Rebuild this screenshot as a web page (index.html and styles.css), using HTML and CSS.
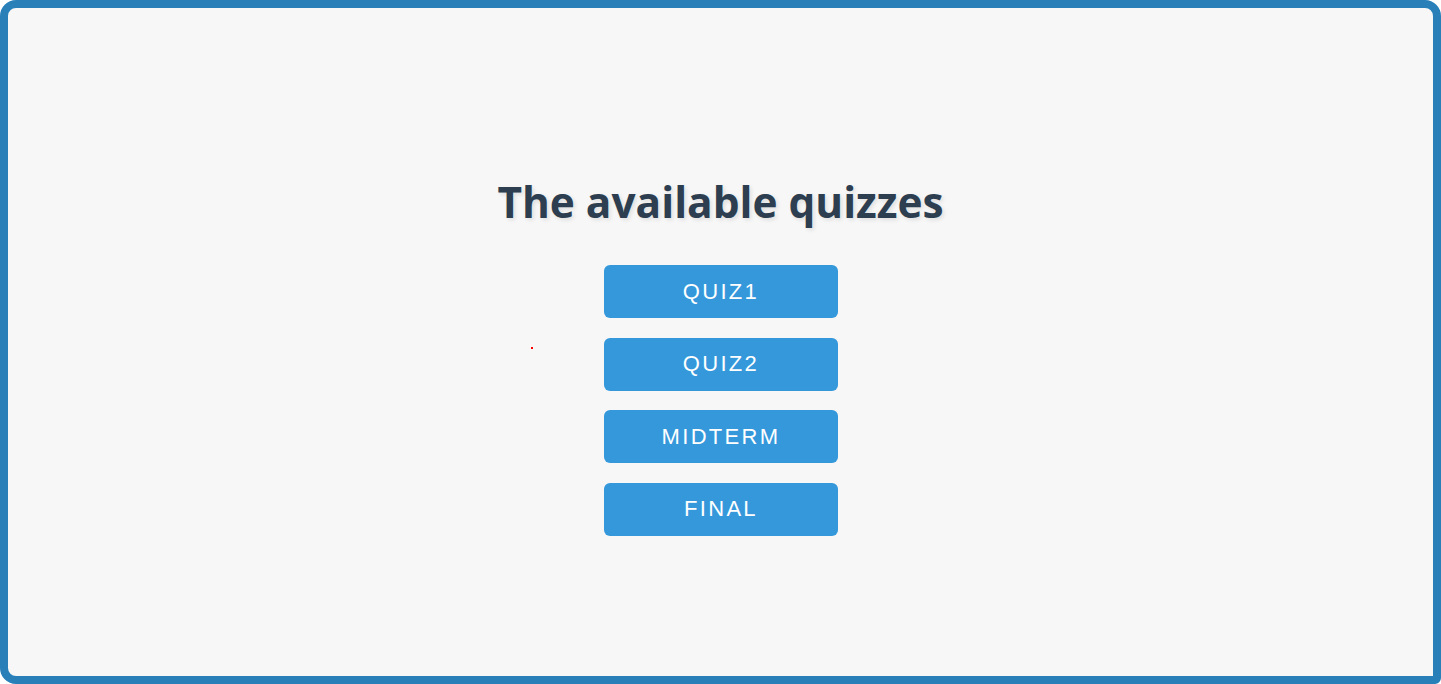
FILE: index.html
```html
<!DOCTYPE html>
<html lang="en">
<head>
<meta charset="utf-8">
<title>Quizzes</title>
<link rel="stylesheet" href="styles.css">
</head>
<body>
<div class="frame">
  <main class="content">
    <h1 class="title">The available quizzes</h1>
    <nav class="quiz-list">
      <button class="quiz-btn">QUIZ1</button>
      <button class="quiz-btn">QUIZ2</button>
      <button class="quiz-btn">MIDTERM</button>
      <button class="quiz-btn">FINAL</button>
    </nav>
  </main>
  <span class="dot"></span>
</div>
</body>
</html>
```

FILE: styles.css
```css
html, body {
  margin: 0;
  padding: 0;
  height: 100%;
}
body {
  background: #ffffff;
  overflow: hidden;
}
.frame {
  position: relative;
  box-sizing: border-box;
  width: 1441px;
  height: 684px;
  border: 8px solid #2980b9;
  border-radius: 16px 16px 6px 16px;
  background: #f7f7f7;
}
.content {
  display: flex;
  flex-direction: column;
  align-items: center;
  padding-top: 166px;
}
.title {
  margin: 0;
  font-family: "Open Sans", "Noto Sans", sans-serif;
  font-weight: 700;
  font-size: 42.4px;
  line-height: 56px;
  color: #2c3e50;
  text-shadow: 2px 2px 4px rgba(0, 0, 0, 0.1);
}
.quiz-list {
  display: flex;
  flex-direction: column;
  gap: 19.5px;
  margin-top: 35px;
}
.quiz-btn {
  width: 234px;
  height: 53px;
  border: none;
  border-radius: 6px;
  background: #3498db;
  color: #ffffff;
  font-family: "Liberation Sans", Arial, sans-serif;
  font-size: 22px;
  letter-spacing: 2.3px;
  padding: 0 0 0 1px;
  cursor: pointer;
}
.dot {
  position: absolute;
  left: 523px;
  top: 339px;
  width: 2px;
  height: 2px;
  background: #ff0000;
}
```
